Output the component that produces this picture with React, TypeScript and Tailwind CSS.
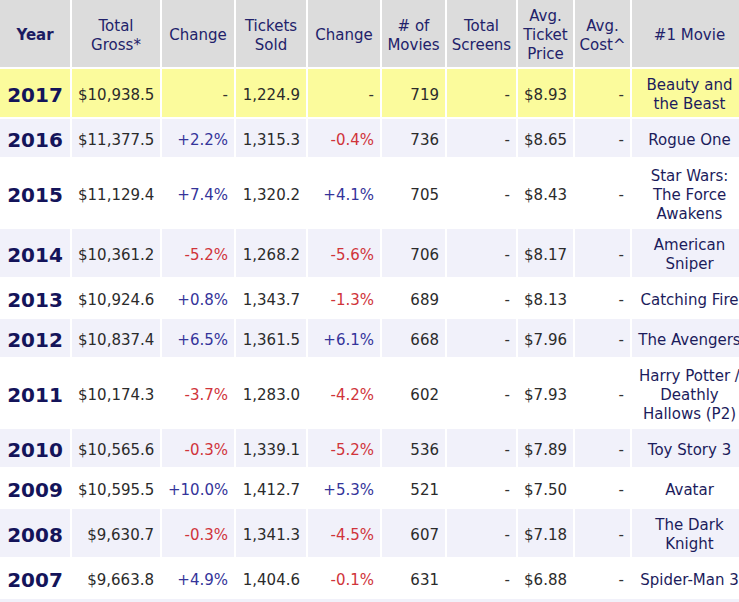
import React from "react";

type Row = {
  year: string;
  gross: string;
  ch1: string;
  tickets: string;
  ch2: string;
  movies: string;
  screens: string;
  price: string;
  cost: string;
  movie: string[];
  bg: string;
};

const rows: Row[] = [
  { year: "2017", gross: "$10,938.5", ch1: "-", tickets: "1,224.9", ch2: "-", movies: "719", screens: "-", price: "$8.93", cost: "-", movie: ["Beauty and", "the Beast"], bg: "bg-[#fbfb9c]" },
  { year: "2016", gross: "$11,377.5", ch1: "+2.2%", tickets: "1,315.3", ch2: "-0.4%", movies: "736", screens: "-", price: "$8.65", cost: "-", movie: ["Rogue One"], bg: "bg-[#f1f1fa]" },
  { year: "2015", gross: "$11,129.4", ch1: "+7.4%", tickets: "1,320.2", ch2: "+4.1%", movies: "705", screens: "-", price: "$8.43", cost: "-", movie: ["Star Wars:", "The Force", "Awakens"], bg: "bg-white" },
  { year: "2014", gross: "$10,361.2", ch1: "-5.2%", tickets: "1,268.2", ch2: "-5.6%", movies: "706", screens: "-", price: "$8.17", cost: "-", movie: ["American", "Sniper"], bg: "bg-[#f1f1fa]" },
  { year: "2013", gross: "$10,924.6", ch1: "+0.8%", tickets: "1,343.7", ch2: "-1.3%", movies: "689", screens: "-", price: "$8.13", cost: "-", movie: ["Catching Fire"], bg: "bg-white" },
  { year: "2012", gross: "$10,837.4", ch1: "+6.5%", tickets: "1,361.5", ch2: "+6.1%", movies: "668", screens: "-", price: "$7.96", cost: "-", movie: ["The Avengers"], bg: "bg-[#f1f1fa]" },
  { year: "2011", gross: "$10,174.3", ch1: "-3.7%", tickets: "1,283.0", ch2: "-4.2%", movies: "602", screens: "-", price: "$7.93", cost: "-", movie: ["Harry Potter /", "Deathly", "Hallows (P2)"], bg: "bg-white" },
  { year: "2010", gross: "$10,565.6", ch1: "-0.3%", tickets: "1,339.1", ch2: "-5.2%", movies: "536", screens: "-", price: "$7.89", cost: "-", movie: ["Toy Story 3"], bg: "bg-[#f1f1fa]" },
  { year: "2009", gross: "$10,595.5", ch1: "+10.0%", tickets: "1,412.7", ch2: "+5.3%", movies: "521", screens: "-", price: "$7.50", cost: "-", movie: ["Avatar"], bg: "bg-white" },
  { year: "2008", gross: "$9,630.7", ch1: "-0.3%", tickets: "1,341.3", ch2: "-4.5%", movies: "607", screens: "-", price: "$7.18", cost: "-", movie: ["The Dark", "Knight"], bg: "bg-[#f1f1fa]" },
  { year: "2007", gross: "$9,663.8", ch1: "+4.9%", tickets: "1,404.6", ch2: "-0.1%", movies: "631", screens: "-", price: "$6.88", cost: "-", movie: ["Spider-Man 3"], bg: "bg-white" },
];

function changeColor(v: string) {
  if (v.startsWith("+")) return "text-[#34349a]";
  if (v.startsWith("-") && v.length > 1) return "text-[#d0343a]";
  return "text-[#333333]";
}

const headers: string[][] = [
  ["Total", "Gross*"],
  ["Change"],
  ["Tickets", "Sold"],
  ["Change"],
  ["# of", "Movies"],
  ["Total", "Screens"],
  ["Avg.", "Ticket", "Price"],
  ["Avg.", "Cost^"],
  ["#1 Movie"],
];

function Lines({ lines }: { lines: string[] }) {
  return (
    <>
      {lines.map((l, i) => (
        <React.Fragment key={i}>
          {i > 0 && <br />}
          {l}
        </React.Fragment>
      ))}
    </>
  );
}

export default function App() {
  const num = "px-[6px] pt-[7px] pb-[3px] text-right align-middle whitespace-nowrap";
  return (
    <div className="w-[739px] h-[602px] overflow-hidden bg-white font-['DejaVu_Sans',Verdana,sans-serif] text-[15px] leading-[19px]">
      <table className="table-fixed border-separate border-spacing-[2px] -ml-[2px] -mt-[2px] w-[751px]">
        <colgroup>
          <col className="w-[70px]" />
          <col className="w-[88px]" />
          <col className="w-[72px]" />
          <col className="w-[70px]" />
          <col className="w-[72px]" />
          <col className="w-[63px]" />
          <col className="w-[69px]" />
          <col className="w-[55px]" />
          <col className="w-[55px]" />
          <col className="w-[115px]" />
        </colgroup>
        <thead>
          <tr>
            <th className="bg-[#dcdcdc] px-[4px] pt-[7px] pb-[3px] text-center align-middle font-bold text-[#1b1b62]">Year</th>
            {headers.map((h, i) => (
              <th key={i} className="bg-[#dcdcdc] px-[1px] pt-[7px] pb-[3px] text-center align-middle font-normal text-[#22226a] whitespace-nowrap">
                <Lines lines={h} />
              </th>
            ))}
          </tr>
        </thead>
        <tbody>
          {rows.map((r) => (
            <tr key={r.year} className={r.bg}>
              <td className={`px-[4px] pt-[7px] pb-[3px] text-center align-middle text-[20px] leading-[28px] font-bold text-[#14145a] ${r.movie.length === 3 ? "h-[68px]" : ""}`}>{r.year}</td>
              <td className={`${num} text-[#2b2b2b]`}>{r.gross}</td>
              <td className={`${num} ${changeColor(r.ch1)}`}>{r.ch1}</td>
              <td className={`${num} text-[#2b2b2b]`}>{r.tickets}</td>
              <td className={`${num} ${changeColor(r.ch2)}`}>{r.ch2}</td>
              <td className={`${num} text-[#2b2b2b]`}>{r.movies}</td>
              <td className={`${num} text-[#333333]`}>{r.screens}</td>
              <td className={`${num} text-[#2b2b2b]`}>{r.price}</td>
              <td className={`${num} text-[#333333]`}>{r.cost}</td>
              <td className="px-[4px] pt-[7px] pb-[3px] text-center align-middle whitespace-nowrap text-[#1c1c5c]">
                <Lines lines={r.movie} />
              </td>
            </tr>
          ))}
          <tr className="bg-[#f1f1fa]">
            <td className="h-[38px]" colSpan={10}></td>
          </tr>
        </tbody>
      </table>
    </div>
  );
}
